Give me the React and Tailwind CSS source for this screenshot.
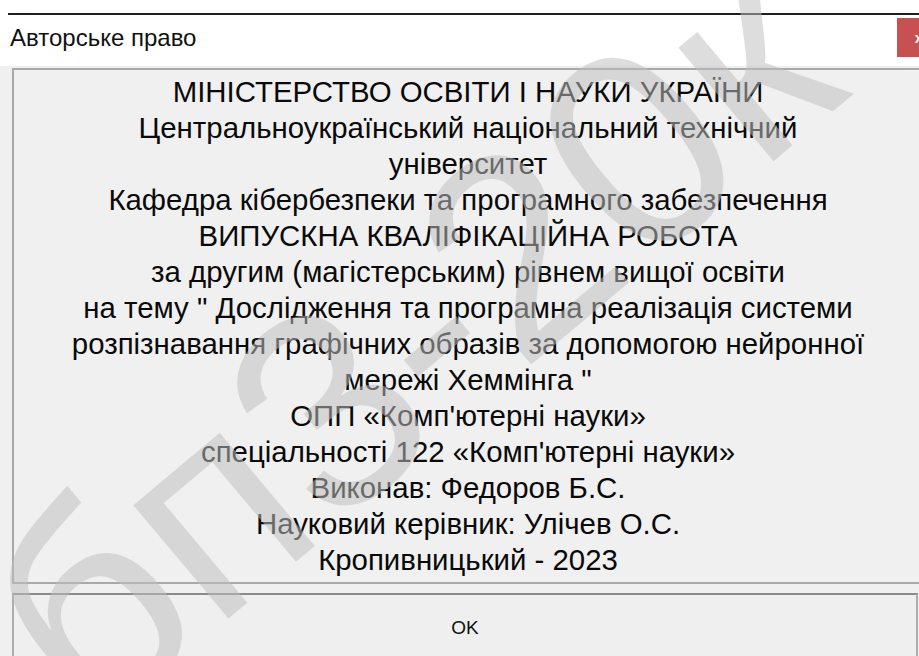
import React from "react";

// Рядки титульного тексту, кожен рядок окремо
const lines = [
  "МІНІСТЕРСТВО ОСВІТИ І НАУКИ УКРАЇНИ",
  "Центральноукраїнський національний технічний",
  "університет",
  "Кафедра кібербезпеки та програмного забезпечення",
  "ВИПУСКНА КВАЛІФІКАЦІЙНА РОБОТА",
  "за другим (магістерським) рівнем вищої освіти",
  "на тему \" Дослідження та програмна реалізація системи",
  "розпізнавання графічних образів за допомогою нейронної",
  "мережі Хеммінга \"",
  "ОПП «Комп'ютерні науки»",
  "спеціальності 122 «Комп'ютерні науки»",
  "Виконав: Федоров Б.С.",
  "Науковий керівник: Улічев О.С.",
  "Кропивницький - 2023",
];

// Напівпрозорий водяний знак по діагоналі поверх вікна
const Watermark = () => (
  <div className="pointer-events-none absolute inset-0 z-10 flex items-center justify-center">
    <span className="translate-x-[-50px] translate-y-[12px] rotate-[-40deg] whitespace-nowrap font-['Liberation_Sans',sans-serif] text-[280px] leading-none text-[rgba(191,191,191,0.53)]">
      бп3-20к
    </span>
  </div>
);

const App = () =>
{
  return (
    <div className="relative h-[656px] w-[919px] overflow-hidden bg-white font-['Liberation_Sans',Arial,sans-serif] text-black">
      {/* верхня смуга та темна лінія */}
      <div className="h-[13px] bg-white" />
      <div className="ml-[8px] h-[2px] bg-[#1e1e1e]" />

      {/* заголовок вікна */}
      <div className="flex h-[51px] items-start justify-between bg-white">
        <div className="ml-[10px] mt-[9px] text-[24px] leading-[27px] text-[#111]">Авторське право</div>
        <div className="mr-[-22px] mt-[3px] flex h-[39px] w-[44px] shrink-0 items-center justify-center bg-[#c75050] text-[15px] font-bold leading-none text-white">
          x
        </div>
      </div>

      {/* клієнтська частина діалогу */}
      <div className="flex flex-col bg-[#f0f0f0] pl-[12px] pt-[2px]">
        <div className="w-[912px] shrink-0 border-2 border-[#a9a9a9] py-[4px] text-center text-[29.4px] leading-[36px] text-[#0a0a0a]">
          {lines.map((line, i) => (
            <div key={i} className="whitespace-nowrap">
              {line}
            </div>
          ))}
        </div>

        <button
          type="button"
          className="mt-[9px] flex h-[70px] w-[906px] shrink-0 items-center justify-center border-2 border-[#adadad] border-t-[#8a8a8a] bg-[#efefef] text-[19px] text-[#111]"
        >
          OK
        </button>
      </div>

      <Watermark />
    </div>
  );
};

export default App;
